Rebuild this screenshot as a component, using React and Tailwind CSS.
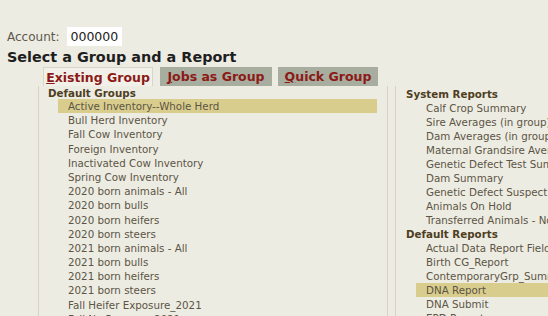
const groups = [
  'Active Inventory--Whole Herd',
  'Bull Herd Inventory',
  'Fall Cow Inventory',
  'Foreign Inventory',
  'Inactivated Cow Inventory',
  'Spring Cow Inventory',
  '2020 born animals - All',
  '2020 born bulls',
  '2020 born heifers',
  '2020 born steers',
  '2021 born animals - All',
  '2021 born bulls',
  '2021 born heifers',
  '2021 born steers',
  'Fall Heifer Exposure_2021',
  'Fall No Program_2021',
]

const systemReports = [
  'Calf Crop Summary',
  'Sire Averages (in group)',
  'Dam Averages (in group)',
  'Maternal Grandsire Averages',
  'Genetic Defect Test Summary',
  'Dam Summary',
  'Genetic Defect Suspect',
  'Animals On Hold',
  'Transferred Animals - Not',
]

const defaultReports = [
  'Actual Data Report Fields',
  'Birth CG_Report',
  'ContemporaryGrp_Summary',
  'DNA Report',
  'DNA Submit',
  'EPD Report',
]

function Item({ label, selected, tight }) {
  return (
    <div
      className={`ml-[10px] pl-[10px] whitespace-nowrap ${
        tight ? 'h-[14px] leading-[14px]' : 'h-[14.2px] leading-[14.2px]'
      } ${selected ? 'bg-[#d9cd8e]' : ''}`}
    >
      {label}
    </div>
  )
}

function Tab({ label, active, w }) {
  return (
    <div
      className={`${w} h-[19px] leading-[19px] text-center text-[12.5px] font-bold text-[#8c1a17] ${
        active ? 'bg-[#f2f1e9] border-t border-l border-r border-[#d8d6c8]' : 'bg-[#a7ae9f]'
      }`}
    >
      <span className="underline">{label[0]}</span>
      {label.slice(1)}
    </div>
  )
}

export default function App() {
  return (
    <div className="w-[548px] h-[316px] overflow-hidden bg-[#edece3] font-['DejaVu_Sans',sans-serif] text-[#5c5444]">
      <div className="pt-[27px] pl-[7px] flex items-center">
        <span className="text-[12px] text-[#5e584c]">Account:</span>
        <span className="ml-[7px] bg-white px-[4px] h-[19px] leading-[19px] text-[12.5px] text-[#222]">000000</span>
      </div>
      <div className="pl-[7px] text-[14.4px] font-bold text-[#1e1e1e] leading-[18px] mt-[2px]">
        Select a Group and a Report
      </div>
      <div className="flex pl-[43px] mt-[1px]">
        <Tab label="Existing Group" active w="w-[110px]" />
        <div className="w-[7px]" />
        <Tab label="Jobs as Group" w="w-[112px]" />
        <div className="w-[6px]" />
        <Tab label="Quick Group" w="w-[100px]" />
      </div>
      <div className="flex text-[10.3px]">
        <div className="ml-[38px] w-[350px] border-l border-r border-[#d6d4c6] pl-[9px] pr-[10px]">
          <div className="font-bold text-[#4e3e22] leading-[14px] h-[13px]">Default Groups</div>
          {groups.map((g, i) => (
            <Item key={g} label={g} selected={i === 0} />
          ))}
        </div>
        <div className="ml-[7px] flex-1 border-l border-[#d6d4c6] pl-[10px] pt-[1px] overflow-hidden">
          <div className="font-bold text-[#4e3e22] leading-[14px]">System Reports</div>
          {systemReports.map((r) => (
            <Item key={r} label={r} tight />
          ))}
          <div className="font-bold text-[#4e3e22] leading-[14px]">Default Reports</div>
          {defaultReports.map((r) => (
            <Item key={r} label={r} tight selected={r === 'DNA Report'} />
          ))}
        </div>
      </div>
    </div>
  )
}
